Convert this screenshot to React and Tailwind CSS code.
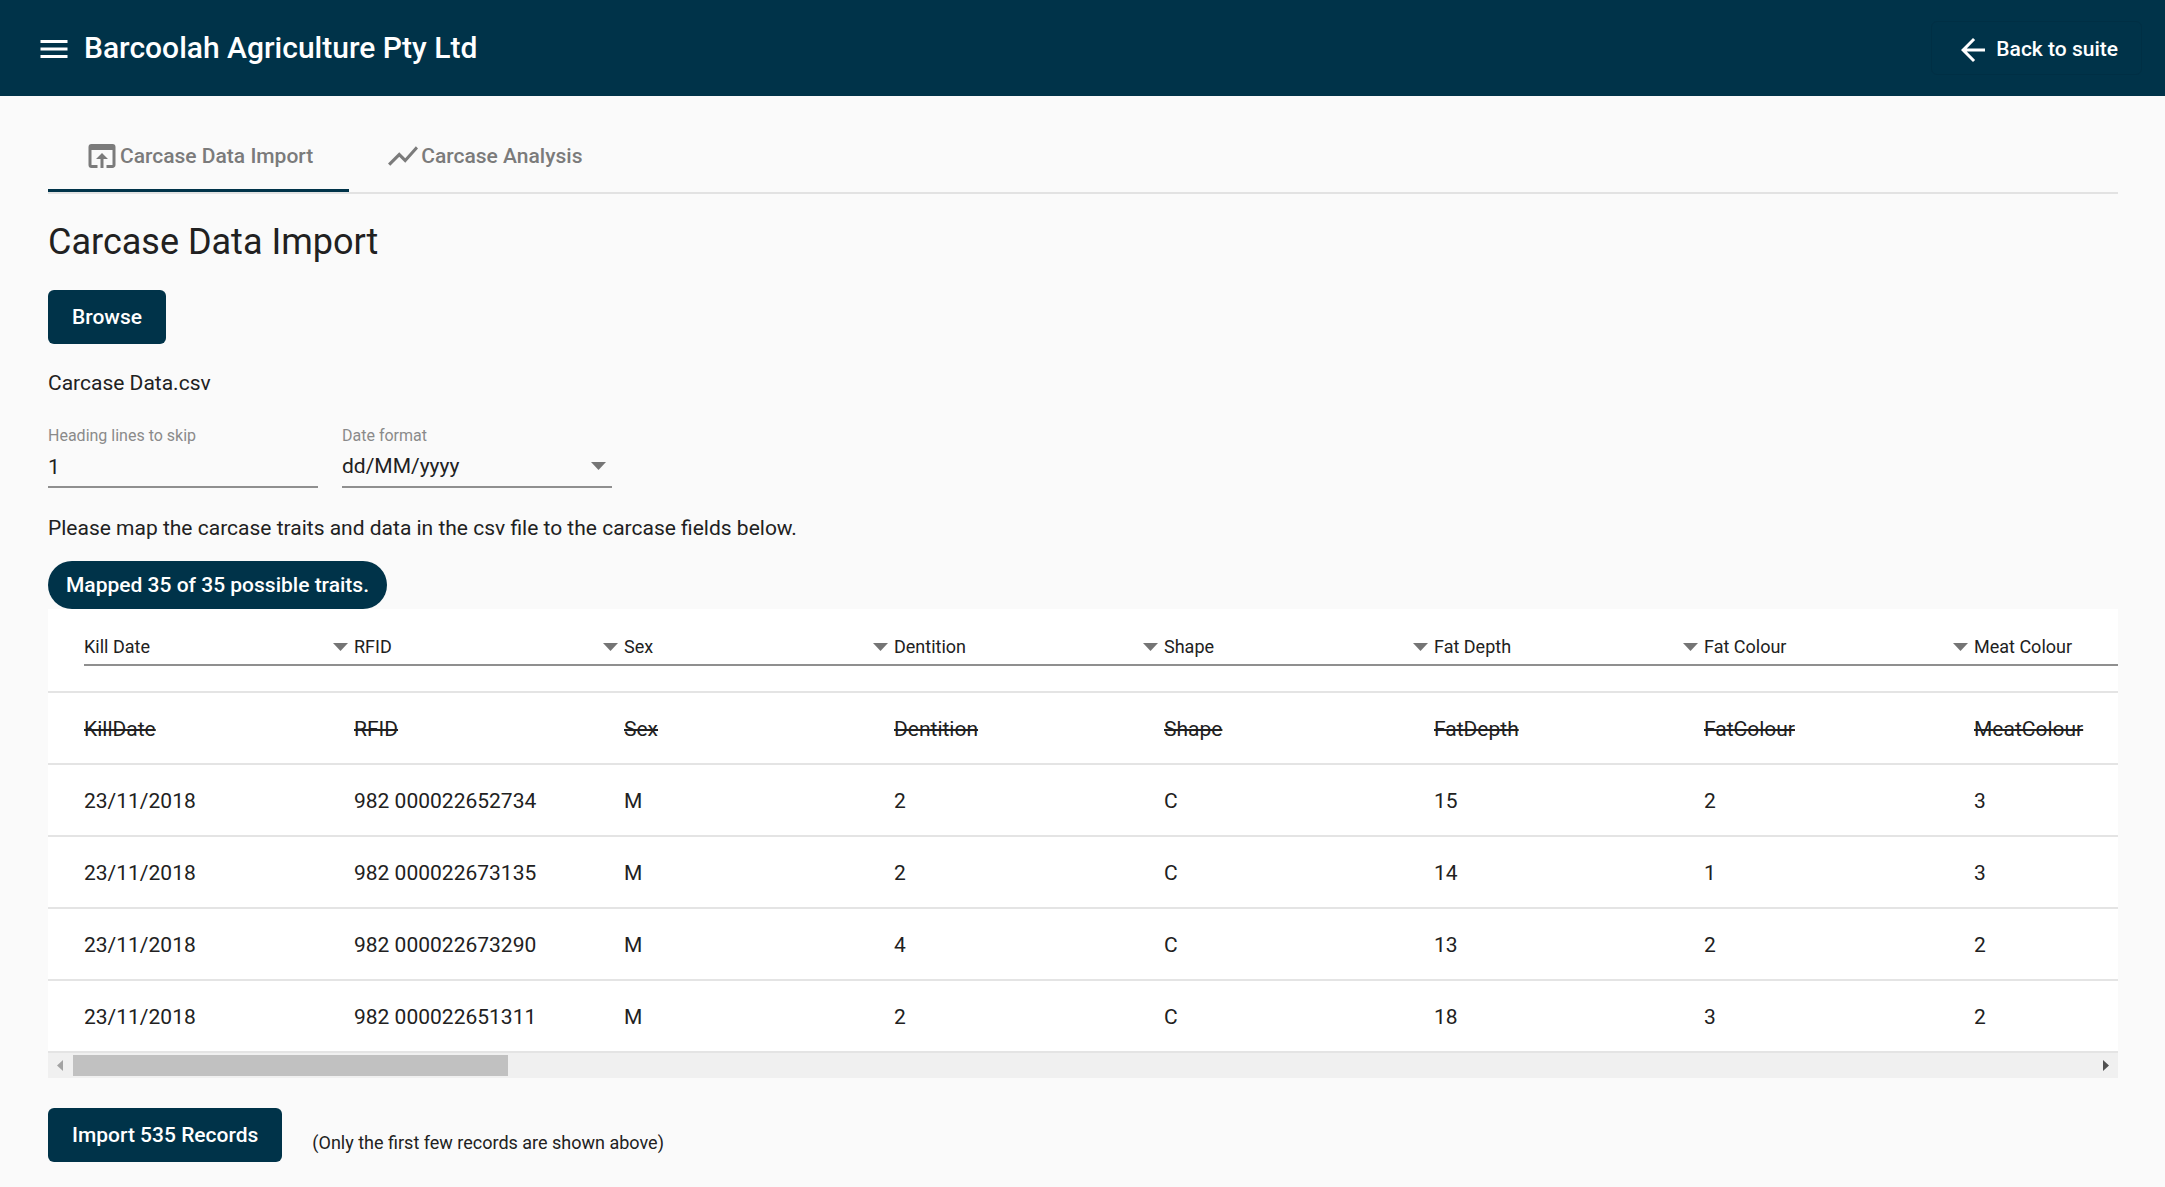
import React, { useState } from 'react';
import { MdArrowBack, MdMenu, MdOpenInBrowser, MdShowChart } from 'react-icons/md';

const DATE_FORMATS = ['dd/MM/yyyy', 'MM/dd/yyyy', 'yyyy-MM-dd'];

const TRAITS = [
  { label: 'Kill Date', column: 'KillDate' },
  { label: 'RFID', column: 'RFID' },
  { label: 'Sex', column: 'Sex' },
  { label: 'Dentition', column: 'Dentition' },
  { label: 'Shape', column: 'Shape' },
  { label: 'Fat Depth', column: 'FatDepth' },
  { label: 'Fat Colour', column: 'FatColour' },
  { label: 'Meat Colour', column: 'MeatColour' }
];

const RECORDS = [
  ['23/11/2018', '982 000022652734', 'M', '2', 'C', '15', '2', '3'],
  ['23/11/2018', '982 000022673135', 'M', '2', 'C', '14', '1', '3'],
  ['23/11/2018', '982 000022673290', 'M', '4', 'C', '13', '2', '2'],
  ['23/11/2018', '982 000022651311', 'M', '2', 'C', '18', '3', '2']
];

const TABS = [
  { id: 'import', label: 'Carcase Data Import', icon: MdOpenInBrowser },
  { id: 'analysis', label: 'Carcase Analysis', icon: MdShowChart }
];

const DropArrow = () => (
  <svg className="absolute right-[6px] top-1/2 -mt-0.5 -translate-y-1/2 w-[15px] h-2 pointer-events-none" viewBox="0 0 15 8">
    <path d="M0 0h15L7.5 8z" fill="#757575" />
  </svg>
);

const PrimaryButton = ({ children }) => (
  <button className="block h-[54px] px-6 pt-0.5 rounded-md bg-[#003349] text-white text-[21px] font-medium">
    {children}
  </button>
);

const Header = () => (
  <header className="h-24 bg-[#003349] text-white flex items-center justify-between pl-9 pr-[23px]">
    <div className="flex items-center gap-3">
      <button aria-label="Menu" className="pt-0.5">
        <MdMenu className="w-9 h-9" />
      </button>
      <h1 className="text-[30px] leading-9 font-medium">Barcoolah Agriculture Pty Ltd</h1>
    </div>
    <a href="#suite" className="h-[54px] px-[23px] pt-[3px] flex items-center gap-[5px] rounded-md border border-[#002f44] text-[21px] font-medium">
      <MdArrowBack className="w-9 h-9" />
      Back to suite
    </a>
  </header>
);

const Tabs = ({ active, onChange }) => (
  <nav className="flex border-b-2 border-[#e2e2e2]" role="tablist">
    {TABS.map(({ id, label, icon: Icon }) => (
      <button
        key={id}
        role="tab"
        aria-selected={active === id}
        onClick={() => onChange(id)}
        className="relative h-[72px] px-9 flex items-center text-[21px] font-medium text-[#7b7b7b]"
      >
        <Icon className="w-9 h-9" />
        <span className="pt-0.5">{label}</span>
        {active === id && <span className="absolute inset-x-0 bottom-0 h-[3px] bg-[#003349]" />}
      </button>
    ))}
  </nav>
);

const ImportOptions = () => {
  const [skip, setSkip] = useState('1');
  const [format, setFormat] = useState('dd/MM/yyyy');

  return (
    <div className="mt-[26px] flex gap-6">
      <div className="w-[270px]">
        <label htmlFor="skip" className="block text-base leading-6 text-[#8a8a8a]">Heading lines to skip</label>
        <input
          id="skip"
          value={skip}
          onChange={(e) => setSkip(e.target.value)}
          className="block w-full h-10 pb-px border-b-2 border-[#8f8f8f] text-[21px] outline-none"
        />
      </div>
      <div className="w-[270px]">
        <label htmlFor="format" className="block text-base leading-6 text-[#8a8a8a]">Date format</label>
        <div className="relative">
          <select
            id="format"
            value={format}
            onChange={(e) => setFormat(e.target.value)}
            className="block w-full h-10 pb-px border-b-2 border-[#8f8f8f] text-[21px] appearance-none outline-none"
          >
            {DATE_FORMATS.map((f) => <option key={f}>{f}</option>)}
          </select>
          <DropArrow />
        </div>
      </div>
    </div>
  );
};

const TraitSelect = ({ label }) => {
  const [value, setValue] = useState(label);

  return (
    <div className="relative border-b-2 border-[#8f8f8f]">
      <select
        aria-label={`Trait for ${label}`}
        value={value}
        onChange={(e) => setValue(e.target.value)}
        className="block w-full h-[31px] pb-1 text-lg leading-[27px] font-normal appearance-none outline-none"
      >
        {TRAITS.map((t) => <option key={t.label}>{t.label}</option>)}
      </select>
      <DropArrow />
    </div>
  );
};

const MappingTable = () => (
  <div>
    <div className="overflow-hidden bg-white">
      <table className="table-fixed w-[2196px] text-left border-separate border-spacing-0">
        <thead>
          <tr>
            {TRAITS.map((t, i) => (
              <th key={t.label} className={`pt-6 pb-[25px] border-b-2 border-[#e4e4e4] ${i === 0 ? 'w-[306px] pl-9' : 'w-[270px]'}`}>
                <TraitSelect label={t.label} />
              </th>
            ))}
          </tr>
        </thead>
        <tbody className="text-[21px]">
          <tr>
            {TRAITS.map((t) => (
              <td key={t.column} className="h-[72px] pt-[3px] border-b-2 border-[#e4e4e4] line-through first:pl-9">{t.column}</td>
            ))}
          </tr>
          {RECORDS.map((row) => (
            <tr key={row[1]}>
              {row.map((cell, i) => (
                <td key={i} className="h-[72px] pt-[3px] border-b-2 border-[#e4e4e4] first:pl-9">{cell}</td>
              ))}
            </tr>
          ))}
        </tbody>
      </table>
    </div>
    <div className="h-[25px] bg-[#f0f0f0] flex items-center justify-between px-[9px]">
      <svg className="w-[6px] h-[11px]" viewBox="0 0 6 11">
        <path d="M6 0v11L0 5.5z" fill="#a3a3a3" />
      </svg>
      <div className="flex-1 mx-[10px]">
        <div className="h-[21px] w-[435px] bg-[#c1c1c1]" />
      </div>
      <svg className="w-[6px] h-[11px]" viewBox="0 0 6 11">
        <path d="M0 0v11L6 5.5z" fill="#505050" />
      </svg>
    </div>
  </div>
);

const App = () => {
  const [tab, setTab] = useState('import');

  return (
    <div className="min-h-screen bg-[#fafafa] font-['Roboto',sans-serif] text-[#212121]">
      <Header />
      <main className="pt-6 pl-12 pr-[47px] pb-6">
        <Tabs active={tab} onChange={setTab} />

        <h2 className="mt-6 mb-6 text-4xl leading-[48px]">Carcase Data Import</h2>
        <PrimaryButton>Browse</PrimaryButton>
        <p className="mt-6 text-[21px] leading-[30px]">Carcase Data.csv</p>

        <ImportOptions />

        <p className="mt-[25px] text-[21px] leading-[30px]">
          Please map the carcase traits and data in the csv file to the carcase fields below.
        </p>
        <div className="mt-[18px] w-fit h-12 px-[18px] pt-0.5 flex items-center rounded-full bg-[#003349] text-white text-[21px] font-medium">
          Mapped 35 of 35 possible traits.
        </div>
        <MappingTable />

        <div className="mt-[30px] flex items-end gap-[30px]">
          <PrimaryButton>Import 535 Records</PrimaryButton>
          <p className="mb-[6px] text-lg leading-[27px]">(Only the first few records are shown above)</p>
        </div>
      </main>
    </div>
  );
};

export default App;
